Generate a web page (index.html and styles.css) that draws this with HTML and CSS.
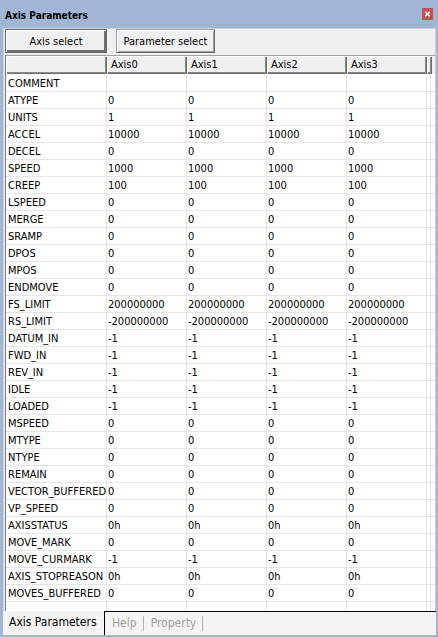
FILE: index.html
```html
<!DOCTYPE html>
<html>
<head>
<meta charset="utf-8">
<link rel="stylesheet" href="styles.css">
</head>
<body>
<div class="window">
  <div class="titlebar">
    <span class="title">Axis Parameters</span>
    <span class="close"><svg width="11" height="12" viewBox="0 0 11 12"><rect width="11" height="12" fill="#c9504f"/><path d="M3.2 3.7 L7.8 8.3 M7.8 3.7 L3.2 8.3" stroke="#fff" stroke-width="1.6"/></svg></span>
  </div>
  <div class="panel">
    <div class="toolbar">
      <button class="btn btn-default">Axis select</button>
      <button class="btn">Parameter select</button>
    </div>
    <div class="grid">
      <div class="head">
        <div class="hc"></div>
        <div class="hc">Axis0</div>
        <div class="hc">Axis1</div>
        <div class="hc">Axis2</div>
        <div class="hc">Axis3</div>
        <div class="hc hc-tail"></div>
      </div>
      <div class="body">
        <div class="row"><div class="c lbl">COMMENT</div><div class="c"></div><div class="c"></div><div class="c"></div><div class="c"></div><div class="c"></div><div class="c c-end"></div></div>
        <div class="row"><div class="c lbl">ATYPE</div><div class="c">0</div><div class="c">0</div><div class="c">0</div><div class="c">0</div><div class="c"></div><div class="c c-end"></div></div>
        <div class="row"><div class="c lbl">UNITS</div><div class="c">1</div><div class="c">1</div><div class="c">1</div><div class="c">1</div><div class="c"></div><div class="c c-end"></div></div>
        <div class="row"><div class="c lbl">ACCEL</div><div class="c">10000</div><div class="c">10000</div><div class="c">10000</div><div class="c">10000</div><div class="c"></div><div class="c c-end"></div></div>
        <div class="row"><div class="c lbl">DECEL</div><div class="c">0</div><div class="c">0</div><div class="c">0</div><div class="c">0</div><div class="c"></div><div class="c c-end"></div></div>
        <div class="row"><div class="c lbl">SPEED</div><div class="c">1000</div><div class="c">1000</div><div class="c">1000</div><div class="c">1000</div><div class="c"></div><div class="c c-end"></div></div>
        <div class="row"><div class="c lbl">CREEP</div><div class="c">100</div><div class="c">100</div><div class="c">100</div><div class="c">100</div><div class="c"></div><div class="c c-end"></div></div>
        <div class="row"><div class="c lbl">LSPEED</div><div class="c">0</div><div class="c">0</div><div class="c">0</div><div class="c">0</div><div class="c"></div><div class="c c-end"></div></div>
        <div class="row"><div class="c lbl">MERGE</div><div class="c">0</div><div class="c">0</div><div class="c">0</div><div class="c">0</div><div class="c"></div><div class="c c-end"></div></div>
        <div class="row"><div class="c lbl">SRAMP</div><div class="c">0</div><div class="c">0</div><div class="c">0</div><div class="c">0</div><div class="c"></div><div class="c c-end"></div></div>
        <div class="row"><div class="c lbl">DPOS</div><div class="c">0</div><div class="c">0</div><div class="c">0</div><div class="c">0</div><div class="c"></div><div class="c c-end"></div></div>
        <div class="row"><div class="c lbl">MPOS</div><div class="c">0</div><div class="c">0</div><div class="c">0</div><div class="c">0</div><div class="c"></div><div class="c c-end"></div></div>
        <div class="row"><div class="c lbl">ENDMOVE</div><div class="c">0</div><div class="c">0</div><div class="c">0</div><div class="c">0</div><div class="c"></div><div class="c c-end"></div></div>
        <div class="row"><div class="c lbl">FS_LIMIT</div><div class="c">200000000</div><div class="c">200000000</div><div class="c">200000000</div><div class="c">200000000</div><div class="c"></div><div class="c c-end"></div></div>
        <div class="row"><div class="c lbl">RS_LIMIT</div><div class="c">-200000000</div><div class="c">-200000000</div><div class="c">-200000000</div><div class="c">-200000000</div><div class="c"></div><div class="c c-end"></div></div>
        <div class="row"><div class="c lbl">DATUM_IN</div><div class="c">-1</div><div class="c">-1</div><div class="c">-1</div><div class="c">-1</div><div class="c"></div><div class="c c-end"></div></div>
        <div class="row"><div class="c lbl">FWD_IN</div><div class="c">-1</div><div class="c">-1</div><div class="c">-1</div><div class="c">-1</div><div class="c"></div><div class="c c-end"></div></div>
        <div class="row"><div class="c lbl">REV_IN</div><div class="c">-1</div><div class="c">-1</div><div class="c">-1</div><div class="c">-1</div><div class="c"></div><div class="c c-end"></div></div>
        <div class="row"><div class="c lbl">IDLE</div><div class="c">-1</div><div class="c">-1</div><div class="c">-1</div><div class="c">-1</div><div class="c"></div><div class="c c-end"></div></div>
        <div class="row"><div class="c lbl">LOADED</div><div class="c">-1</div><div class="c">-1</div><div class="c">-1</div><div class="c">-1</div><div class="c"></div><div class="c c-end"></div></div>
        <div class="row"><div class="c lbl">MSPEED</div><div class="c">0</div><div class="c">0</div><div class="c">0</div><div class="c">0</div><div class="c"></div><div class="c c-end"></div></div>
        <div class="row"><div class="c lbl">MTYPE</div><div class="c">0</div><div class="c">0</div><div class="c">0</div><div class="c">0</div><div class="c"></div><div class="c c-end"></div></div>
        <div class="row"><div class="c lbl">NTYPE</div><div class="c">0</div><div class="c">0</div><div class="c">0</div><div class="c">0</div><div class="c"></div><div class="c c-end"></div></div>
        <div class="row"><div class="c lbl">REMAIN</div><div class="c">0</div><div class="c">0</div><div class="c">0</div><div class="c">0</div><div class="c"></div><div class="c c-end"></div></div>
        <div class="row"><div class="c lbl">VECTOR_BUFFERED</div><div class="c">0</div><div class="c">0</div><div class="c">0</div><div class="c">0</div><div class="c"></div><div class="c c-end"></div></div>
        <div class="row"><div class="c lbl">VP_SPEED</div><div class="c">0</div><div class="c">0</div><div class="c">0</div><div class="c">0</div><div class="c"></div><div class="c c-end"></div></div>
        <div class="row"><div class="c lbl">AXISSTATUS</div><div class="c">0h</div><div class="c">0h</div><div class="c">0h</div><div class="c">0h</div><div class="c"></div><div class="c c-end"></div></div>
        <div class="row"><div class="c lbl">MOVE_MARK</div><div class="c">0</div><div class="c">0</div><div class="c">0</div><div class="c">0</div><div class="c"></div><div class="c c-end"></div></div>
        <div class="row"><div class="c lbl">MOVE_CURMARK</div><div class="c">-1</div><div class="c">-1</div><div class="c">-1</div><div class="c">-1</div><div class="c"></div><div class="c c-end"></div></div>
        <div class="row"><div class="c lbl">AXIS_STOPREASON</div><div class="c">0h</div><div class="c">0h</div><div class="c">0h</div><div class="c">0h</div><div class="c"></div><div class="c c-end"></div></div>
        <div class="row"><div class="c lbl">MOVES_BUFFERED</div><div class="c">0</div><div class="c">0</div><div class="c">0</div><div class="c">0</div><div class="c"></div><div class="c c-end"></div></div>
        <div class="row"><div class="c lbl"></div><div class="c"></div><div class="c"></div><div class="c"></div><div class="c"></div><div class="c"></div><div class="c c-end"></div></div>
      </div>
    </div>
  </div>
  <div class="tabs">
    <div class="tab tab-active">Axis Parameters</div>
    <div class="tab">Help</div>
    <span class="sep"></span>
    <div class="tab">Property</div>
    <span class="sep"></span>
    <div class="tab-fill"></div>
  </div>
</div>
</body>
</html>
```

FILE: styles.css
```css
* { box-sizing: border-box; }
html, body { margin: 0; padding: 0; }
body {
  width: 438px;
  height: 637px;
  overflow: hidden;
  font-family: "DejaVu Sans Condensed", "DejaVu Sans", sans-serif;
  font-stretch: condensed;
  font-size: 11px;
  color: #000;
}
.window {
  width: 438px;
  height: 637px;
  background: #9fb7d4;
  padding: 0 2px 2px 3px;
  display: flex;
  flex-direction: column;
  overflow: hidden;
}
.titlebar {
  height: 28px;
  flex: 0 0 28px;
  display: flex;
  align-items: flex-start;
  justify-content: space-between;
  padding: 0 3px 0 2px;
}
.title {
  font-weight: bold;
  font-size: 10px;
  line-height: 14px;
  margin-top: 9px;
  color: #000;
}
.close {
  display: block;
  width: 11px;
  height: 12px;
  margin-top: 8px;
}
.close svg { display: block; }
.panel {
  flex: 0 0 583px;
  min-height: 0;
  overflow: hidden;
  background: #f0f0f0;
  border: 1px solid #cfcfcf;
  border-bottom: none;
  display: flex;
  flex-direction: column;
}
.toolbar {
  flex: 0 0 26px;
  display: flex;
  align-items: flex-start;
  gap: 9px;
  padding-left: 1px;
}
.btn {
  font-family: inherit;
  font-stretch: condensed;
  font-size: 11px;
  color: #000;
  height: 24px;
  padding: 1px 0 0 0;
  margin: 0;
  background: #f0f0f0;
  border: 1px solid #a0a0a0;
  border-right-color: #696969;
  border-bottom-color: #696969;
  box-shadow: inset 1px 1px 0 #fff, inset -1px -1px 0 #a0a0a0;
  text-align: center;
}
.btn-default {
  width: 102px;
  border-color: #6d6d6d;
  box-shadow: inset 1px 1px 0 #fff, inset -2px -2px 0 #6d6d6d;
}
.btn:not(.btn-default) { width: 99px; }
.grid {
  flex: 1;
  min-height: 0;
  margin-left: 1px;
  display: flex;
  flex-direction: column;
  overflow: hidden;
  border-left: 1px solid #7a7a7a;
  background: #fff;
}
.head {
  flex: 0 0 19px;
  display: grid;
  grid-template-columns: 101px 80px 80px 80px 80px 5px 1fr;
  border-top: 1px solid #a0a0a0;
  background: #f0f0f0;
}
.hc {
  height: 18px;
  padding: 1px 0 0 4px;
  line-height: 16px;
  background: #f0f0f0;
  box-shadow: inset 1px 1px 0 #fff, inset -1px -1px 0 #6d6d6d, inset -2px -2px 0 #8a8a8a;
  white-space: nowrap;
  overflow: hidden;
}
.hc:first-child { padding-left: 0; }
.body {
  flex: 1;
  min-height: 0;
  overflow: hidden;
  padding-top: 1px;
  background: #fff;
}
.row {
  display: grid;
  grid-template-columns: 101px 80px 80px 80px 80px 4px 1fr;
  height: 17px;
  border-bottom: 1px solid #e6e6e6;
}
.c {
  border-right: 1px solid #e6e6e6;
  padding: 2px 0 0 1px;
  line-height: 14px;
  white-space: nowrap;
  overflow: hidden;
}
.c.lbl { padding-left: 2px; }
.c-end { border-right: none; }
.tabs {
  flex: 0 0 24px;
  display: flex;
  align-items: stretch;
  background: #f4f4f4;
  border-top: 1px solid #000;
  font-size: 12px;
}
.tab {
  padding: 0 6px 0 7px;
  line-height: 22px;
  color: #a0a0a0;
  white-space: nowrap;
}
.tab-active {
  color: #000;
  padding: 0 6px 0 6px;
  width: 102px;
  border-right: 1px solid #000;
  margin-top: -1px;
  background: #f4f4f4;
  line-height: 23px;
}
.sep {
  width: 1px;
  background: #b0b0b0;
  margin: 4px 0 4px 0;
}
.tab-fill { flex: 1; }
```
